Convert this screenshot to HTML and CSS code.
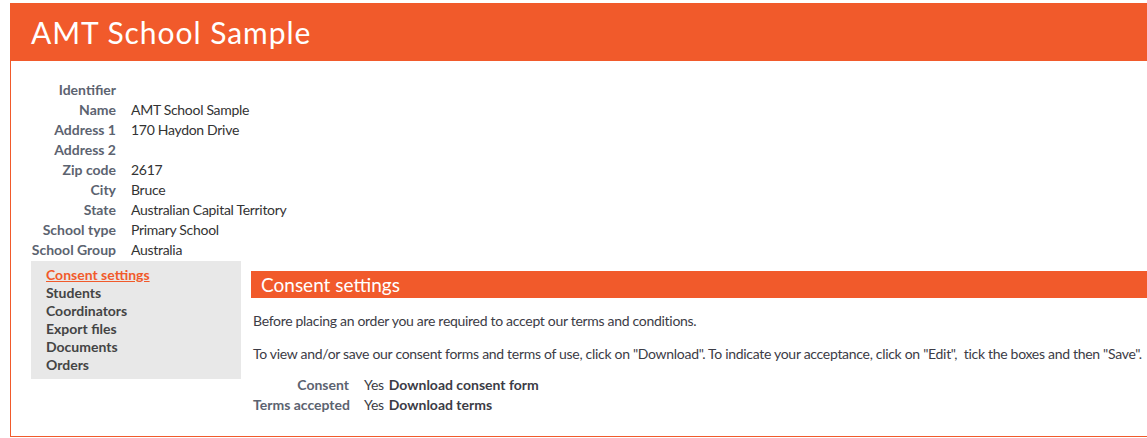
FILE: index.html
```html
<!DOCTYPE html>
<html lang="en">
<head>
    <meta charset="UTF-8">
    <title>AMT School Sample</title>
    <link rel="stylesheet" href="styles.css">
</head>
<body>
    <div class="panel">
        <h1 class="panel-title">AMT School Sample</h1>

        <div class="details">
            <div class="label">Identifier</div><div class="value"></div>
            <div class="label">Name</div><div class="value">AMT School Sample</div>
            <div class="label">Address 1</div><div class="value">170 Haydon Drive</div>
            <div class="label">Address 2</div><div class="value"></div>
            <div class="label">Zip code</div><div class="value">2617</div>
            <div class="label">City</div><div class="value">Bruce</div>
            <div class="label">State</div><div class="value">Australian Capital Territory</div>
            <div class="label">School type</div><div class="value">Primary School</div>
            <div class="label">School Group</div><div class="value">Australia</div>
        </div>

        <div class="layout">
            <ul class="side-nav">
                <li><a href="#" class="active">Consent settings</a></li>
                <li><a href="#">Students</a></li>
                <li><a href="#">Coordinators</a></li>
                <li><a href="#">Export files</a></li>
                <li><a href="#">Documents</a></li>
                <li><a href="#">Orders</a></li>
            </ul>

            <div class="main">
                <h2 class="section-title">Consent settings</h2>
                <p>Before placing an order you are required to accept our terms and conditions.</p>
                <p>To view and/or save our consent forms and terms of use, click on "Download". To indicate your acceptance, click on "Edit",&nbsp; tick the boxes and then "Save".</p>
                <div class="consent">
                    <div class="label">Consent</div>
                    <div class="yes">Yes</div>
                    <a href="#" class="download">Download consent form</a>
                    <div class="label">Terms accepted</div>
                    <div class="yes">Yes</div>
                    <a href="#" class="download">Download terms</a>
                </div>
            </div>
        </div>
    </div>
</body>
</html>
```

FILE: styles.css
```css
body {
    margin: 0;
    padding: 3px 0 0 10px;
    font-family: 'Lato', 'Noto Sans', sans-serif;
    font-size: 14px;
    color: #3c3c46;
    background: #ffffff;
    overflow: hidden;
}

.panel {
    width: 1200px;
    border-left: 1px solid #f15a2b;
    border-bottom: 1px solid #f15a2b;
    padding-bottom: 21px;
}

.panel-title {
    margin: 0;
    height: 58px;
    line-height: 58px;
    padding-left: 20px;
    background: #f15a2b;
    color: #ffffff;
    font-size: 30px;
    font-weight: normal;
    letter-spacing: 0.95px;
}

.details {
    display: grid;
    grid-template-columns: 85px auto;
    column-gap: 15px;
    margin: 19px 0 0 20px;
    line-height: 20px;
}

.label {
    text-align: right;
    font-weight: bold;
    color: #5c6370;
    white-space: nowrap;
}

.value {
    min-height: 20px;
    color: #333;
    letter-spacing: -0.3px;
}

.layout {
    display: flex;
    align-items: flex-start;
    gap: 10px;
    margin: 1px 0 0 20px;
}

.side-nav {
    list-style: none;
    margin: 0;
    padding: 5px 0 5px 15px;
    width: 195px;
    background: #e8e8e8;
    line-height: 18px;
}

.side-nav a {
    color: #444;
    font-weight: bold;
    text-decoration: none;
}

.side-nav a.active {
    color: #f15a2b;
    text-decoration: underline;
}

.main {
    flex: 1;
    margin-top: 10px;
}

.section-title {
    margin: 0;
    height: 27px;
    line-height: 27px;
    padding-left: 10px;
    background: #f15a2b;
    color: #ffffff;
    font-size: 19px;
    font-weight: normal;
    letter-spacing: 0;
}

.main p {
    margin: 13px 0 12px 2px;
    line-height: 20px;
    color: #3c3c46;
    letter-spacing: -0.3px;
    white-space: nowrap;
}

.consent {
    display: grid;
    grid-template-columns: 96px auto auto;
    justify-content: start;
    column-gap: 15px;
    line-height: 20px;
    margin: -1px 0 0 2px;
}

.consent .yes {
    color: #3c3c46;
    letter-spacing: -0.3px;
}

.consent .download {
    margin-left: -10px;
    color: #3c3c46;
    font-weight: bold;
    text-decoration: none;
}
```
